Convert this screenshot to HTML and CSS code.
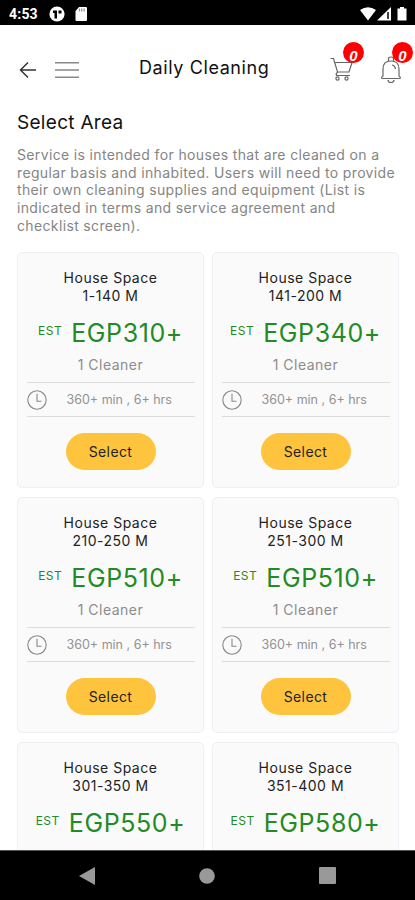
FILE: index.html
```html
<!DOCTYPE html>
<html lang="en">
<head>
<meta charset="utf-8">
<title>Daily Cleaning</title>
<link rel="stylesheet" href="styles.css">
</head>
<body>
<svg width="0" height="0" class="defs"><symbol id="clock" viewBox="0 0 20 20"><circle cx="10" cy="10" r="9.2"/><path d="M10 3.8v7.4h4.5"/></symbol></svg>
<div class="phone">
  <div class="status">
    <span class="clock-text">4:53</span>
    <svg class="status-left" width="40" height="16" viewBox="0 0 40 16"><circle cx="8" cy="8" r="7.6" fill="#fff"/><path d="M4 4.500h4v8H5.500V7H4zM9.500 4.500h3v3h-3z" fill="#000"/><path d="M30 1h7q1 0 1 1v12q0 1-1 1H27.500q-1 0-1-1V5z" fill="#fff"/><path d="M30.500 2.500v3M32.800 2.500v3M35.100 2.500v3" stroke="#999" stroke-width="1.300"/></svg>
    <svg class="status-right" width="48" height="16" viewBox="0 0 48 16" fill="#fff"><path d="M0 4Q8-1.500 16 4L8 14.500z"/><path d="M17 14.500L31 1v13.500z"/><path d="M28 6v7" stroke="#000" stroke-width="1.500"/><path d="M37.500 2.500h2.500V1h4v1.500h2.500v12h-9z"/></svg>
  </div>
  <header class="bar">
    <svg class="back" width="18" height="18" viewBox="0 0 18 18"><path d="M17 9H2M9 1.500L1.500 9L9 16.500"/></svg>
    <svg class="menu" width="24" height="18" viewBox="0 0 24 18"><path d="M0 1.800h24M0 9h24M0 16.200h24"/></svg>
    <h1>Daily Cleaning</h1>
    <div class="action cart">
      <svg width="24" height="26" viewBox="0 0 24 26"><path d="M0.500 2.500h3l4 13.500h11.500L22 6.500H5M8 16q-2.500 1-1.500 3.500H20"/><circle cx="7.500" cy="22.500" r="1.600"/><circle cx="16.500" cy="22.500" r="1.600"/></svg>
      <span class="badge">0</span>
    </div>
    <div class="action bell">
      <svg width="22" height="28" viewBox="0 0 22 28"><path d="M3 20V13Q3 5 11 5T19 13V20Q21 21 20 22.500H2Q1 21 3 20ZM8.500 5V3Q8.500 1 11 1T13.500 3V5M8 24Q8 26.500 11 26.500T14 24M12 9Q15 9.500 15.500 13"/></svg>
      <span class="badge">0</span>
    </div>
  </header>
  <main>
    <h2>Select Area</h2>
    <p class="intro">Service is intended for houses that are cleaned on a<br>regular basis and inhabited. Users will need to provide<br>their own cleaning supplies and equipment (List is<br>indicated in terms and service agreement and<br>checklist screen).</p>
    <div class="grid">
      <article class="card"><h3>House Space<br>1-140 M</h3><div class="price"><small>EST</small><b>EGP310+</b></div><div class="cleaner">1 Cleaner</div><div class="time"><svg><use href="#clock"/></svg><span>360+ min , 6+ hrs</span></div><button>Select</button></article>
      <article class="card"><h3>House Space<br>141-200 M</h3><div class="price"><small>EST</small><b>EGP340+</b></div><div class="cleaner">1 Cleaner</div><div class="time"><svg><use href="#clock"/></svg><span>360+ min , 6+ hrs</span></div><button>Select</button></article>
      <article class="card"><h3>House Space<br>210-250 M</h3><div class="price"><small>EST</small><b>EGP510+</b></div><div class="cleaner">1 Cleaner</div><div class="time"><svg><use href="#clock"/></svg><span>360+ min , 6+ hrs</span></div><button>Select</button></article>
      <article class="card"><h3>House Space<br>251-300 M</h3><div class="price"><small>EST</small><b>EGP510+</b></div><div class="cleaner">1 Cleaner</div><div class="time"><svg><use href="#clock"/></svg><span>360+ min , 6+ hrs</span></div><button>Select</button></article>
      <article class="card"><h3>House Space<br>301-350 M</h3><div class="price"><small>EST</small><b>EGP550+</b></div></article>
      <article class="card"><h3>House Space<br>351-400 M</h3><div class="price"><small>EST</small><b>EGP580+</b></div></article>
    </div>
  </main>
  <nav class="nav">
    <svg width="16" height="18" viewBox="0 0 16 18"><path d="M16 0v18L0 9z"/></svg>
    <svg width="16" height="16" viewBox="0 0 16 16"><circle cx="8" cy="8" r="7.800"/></svg>
    <svg width="17" height="17" viewBox="0 0 17 17"><rect width="17" height="17" rx="1"/></svg>
  </nav>
</div>
</body>
</html>
```
FILE: styles.css
```css
* { box-sizing: border-box; }
body { margin: 0; font-family: Inter, sans-serif; background: #fff; }
h1, h2, h3, p { margin: 0; font-weight: 400; }
svg { display: block; flex: none; }
.defs { position: absolute; }
.phone { width: 415px; height: 900px; display: flex; flex-direction: column; overflow: hidden; }

.status { height: 25px; flex: none; background: #000; color: #fff; display: flex; align-items: center; padding: 2px 7px 0 9px; }
.clock-text { width: 40px; font: 700 14px/20px Roboto, sans-serif; letter-spacing: 0.2px; }
.status-right { margin-left: auto; }

.bar { height: 86px; flex: none; display: flex; padding: 0 13px 0 19px; }
.back { margin-top: 36px; fill: none; stroke: #333; stroke-width: 1.5; }
.menu { margin: 36px 0 0 18px; stroke: #888; stroke-width: 1.6; }
.bar h1 { width: 140px; margin: 31px 0 0 60px; font-size: 18px; line-height: 24px; letter-spacing: 0.6px; color: #111; white-space: nowrap; }
.action { position: relative; }
.action svg { fill: none; stroke: #666; stroke-width: 1.2; }
.cart { margin: 31px 0 0 51px; }
.bell { margin: 31px 0 0 auto; }
.badge { position: absolute; top: -14px; left: 13px; width: 21px; height: 21px; border-radius: 50%; background: #f00; color: #fff; font: italic 700 15px/27px "Liberation Sans", sans-serif; text-align: center; }
.bell .badge { left: 12px; }

main { flex: 1; min-height: 0; overflow: hidden; padding: 0 16px 0 17px; }
h2 { font-size: 19px; line-height: 24px; letter-spacing: 0.3px; color: #111; }
.intro { margin: 11px 0 17px; font-size: 14px; line-height: 17.7px; letter-spacing: 0.355px; color: #858585; white-space: nowrap; }
.grid { display: grid; grid-template-columns: 187px 187px; gap: 8.5px 8px; grid-auto-rows: 236.5px; }
.card { border: 1px solid #eeeff5; border-radius: 5px; background: #fafafb; padding: 16.5px 9px 0; display: flex; flex-direction: column; align-items: center; }
.card h3 { font-size: 14px; line-height: 17.7px; letter-spacing: 0.5px; text-align: center; color: #222; }
.price { margin-top: 14px; height: 30px; display: flex; gap: 9px; color: #228b22; line-height: 30px; }
.price small { font-size: 12px; line-height: 25px; letter-spacing: 0.5px; }
.price b { font-size: 25px; font-weight: 400; letter-spacing: 0.6px; }
.cleaner { margin-top: 7px; height: 20px; font-size: 14px; line-height: 20px; letter-spacing: 0.5px; color: #8c8c8c; }
.time { width: 168px; height: 35px; margin-top: 7px; border-top: 1px solid #dcdcdc; border-bottom: 1px solid #dcdcdc; display: flex; align-items: center; }
.time svg { width: 20px; height: 20px; margin-right: 20px; fill: none; stroke: #888; stroke-width: 1.1; }
.time span { font-size: 12.5px; line-height: 18px; letter-spacing: 0; color: #929292; white-space: nowrap; }
.card button { width: 90px; height: 37px; margin-top: 16px; padding: 0; border: 0; border-radius: 19px; background: #ffc43d; color: #222; font: 400 14px/20px Inter, sans-serif; letter-spacing: 0.4px; }

.nav { height: 50px; flex: none; background: #000; border-top: 1px solid #555; display: flex; justify-content: space-between; align-items: center; padding: 0 79px; }
.nav svg { fill: #999; }
```
